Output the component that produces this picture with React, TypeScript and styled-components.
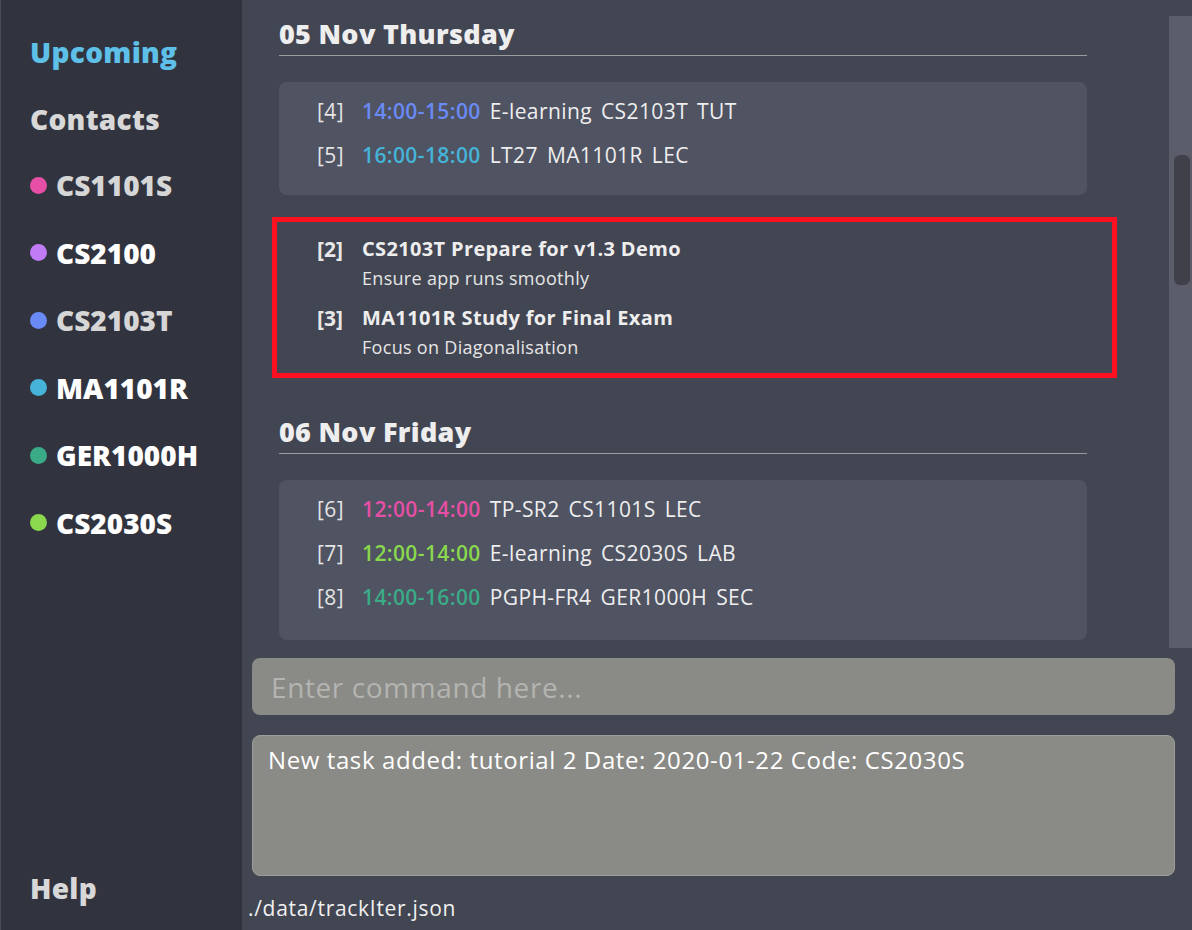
import React from "react";
import styled, { createGlobalStyle } from "styled-components";

const Global = createGlobalStyle`
  html, body { margin: 0; padding: 0; background: #424552; }
  body { font-family: "Open Sans", "Noto Sans", sans-serif; }
  * { box-sizing: border-box; }
`;

const Shell = styled.div`
  display: flex;
  width: 1192px;
  height: 930px;
  overflow: hidden;
  background: #424552;
`;

const Sidebar = styled.nav`
  width: 242px;
  flex: none;
  background: #31343f;
  border-left: 1px solid #4a4d58;
  display: flex;
  flex-direction: column;
  padding: 30px 0 20px 29px;
`;

const NavItem = styled.div<{ $color: string; $height?: number }>`
  font-size: 28px;
  font-weight: 800;
  color: ${(p) => p.$color};
  height: ${(p) => p.$height ?? 67}px;
  line-height: 44px;
  letter-spacing: 0.3px;
  flex: none;
`;

const ContactItem = styled.div<{ $text: string }>`
  display: flex;
  align-items: center;
  gap: 9px;
  height: 67.5px;
  padding-bottom: 25px;
  font-size: 28px;
  font-weight: 800;
  color: ${(p) => p.$text};
  letter-spacing: 0px;
  flex: none;
`;

const Dot = styled.span<{ $color: string }>`
  width: 17px;
  height: 17px;
  border-radius: 50%;
  background: ${(p) => p.$color};
  flex: none;
`;

const Spacer = styled.div`
  flex: 1;
`;

const Main = styled.main`
  flex: 1;
  display: flex;
  flex-direction: column;
  min-width: 0;
`;

const ListArea = styled.div`
  height: 648px;
  display: flex;
  flex: none;
`;

const ListContent = styled.div`
  flex: 1;
  padding: 14px 82px 0 37px;
  overflow: hidden;
`;

const Track = styled.div`
  width: 23px;
  margin-top: 16px;
  background: #5b5d6b;
  padding: 139px 2px 0 5px;
`;

const Thumb = styled.div`
  height: 130px;
  border-radius: 6px;
  background: #3f4049;
`;

const DayHeading = styled.h2`
  margin: 0;
  font-size: 27px;
  font-weight: 800;
  color: #eeeeee;
  line-height: 40px;
  padding-bottom: 1px;
  border-bottom: 1.5px solid #9b9b9e;
  letter-spacing: 0.3px;
`;

const Card = styled.div<{ $bottom: number }>`
  margin-top: 26px;
  background: #4f5362;
  border-radius: 8px;
  padding: 7px 0 ${(p) => p.$bottom}px 38px;
  display: flex;
  flex-direction: column;
`;

const EventRow = styled.div`
  display: flex;
  align-items: center;
  height: 44px;
  font-size: 21px;
  color: #eeeeee;
  gap: 9px;
  letter-spacing: 0.4px;
`;

const Index = styled.span`
  width: 36px;
  color: #e4e4e4;
`;

const Time = styled.span<{ $color: string }>`
  color: ${(p) => p.$color};
  font-weight: 600;
`;

const Highlight = styled.div`
  margin: 22px -30px 0 -7px;
  border: 5px solid #ff1020;
  padding: 12px 0 12px 40px;
  display: flex;
  flex-direction: column;
  gap: 11px;
`;

const Task = styled.div`
  display: flex;
`;

const TaskIndex = styled.span`
  width: 45px;
  font-size: 21px;
  font-weight: 700;
  color: #e8e8e8;
  line-height: 30px;
`;

const TaskBody = styled.div`
  display: flex;
  flex-direction: column;
`;

const TaskTitle = styled.span`
  font-size: 20px;
  font-weight: 700;
  color: #eeeeee;
  line-height: 30px;
  letter-spacing: 0.35px;
`;

const TaskDesc = styled.span`
  font-size: 18px;
  color: #e6e6e6;
  line-height: 28px;
  letter-spacing: 0.3px;
`;

const Section = styled.section<{ $gap: number }>`
  margin-top: ${(p) => p.$gap}px;
`;

const CommandBox = styled.div`
  margin: 10px 17px 0 10px;
  height: 57px;
  border-radius: 8px;
  background: #8a8a86;
  display: flex;
  align-items: center;
  padding-left: 19px;
  font-size: 28px;
  color: #b4b4b1;
  letter-spacing: 0.6px;
`;

const ResultBox = styled.div`
  margin: 20px 17px 0 10px;
  height: 141px;
  border-radius: 8px;
  background: #8a8a86;
  border: 1px solid #9c9c98;
  padding: 7px 15px;
  font-size: 24px;
  color: #ffffff;
  letter-spacing: 0.6px;
`;

const StatusBar = styled.div`
  padding: 18px 0 0 6px;
  font-size: 21px;
  color: #f0f0f0;
  letter-spacing: 0.7px;
`;

const contacts = [
  { code: "CS1101S", dot: "#e64fa5", text: "#d6d6d6" },
  { code: "CS2100", dot: "#c07bf5", text: "#ffffff" },
  { code: "CS2103T", dot: "#6a8af5", text: "#d6d6d6" },
  { code: "MA1101R", dot: "#45b4d8", text: "#ffffff" },
  { code: "GER1000H", dot: "#3aab86", text: "#ffffff" },
  { code: "CS2030S", dot: "#8ad84d", text: "#ffffff" },
];

type Ev = { idx: number; time: string; color: string; parts: string[] };

const thu: Ev[] = [
  { idx: 4, time: "14:00-15:00", color: "#6a8af5", parts: ["E-learning", "CS2103T", "TUT"] },
  { idx: 5, time: "16:00-18:00", color: "#45b4d8", parts: ["LT27", "MA1101R", "LEC"] },
];

const fri: Ev[] = [
  { idx: 6, time: "12:00-14:00", color: "#e64fa5", parts: ["TP-SR2", "CS1101S", "LEC"] },
  { idx: 7, time: "12:00-14:00", color: "#8ad84d", parts: ["E-learning", "CS2030S", "LAB"] },
  { idx: 8, time: "14:00-16:00", color: "#3aab86", parts: ["PGPH-FR4", "GER1000H", "SEC"] },
];

const EventList = ({ events, bottom }: { events: Ev[]; bottom: number }) => (
  <Card $bottom={bottom}>
    {events.map((e) => (
      <EventRow key={e.idx}>
        <Index>[{e.idx}]</Index>
        <Time $color={e.color}>{e.time}</Time>
        {e.parts.map((p) => (
          <span key={p}>{p}</span>
        ))}
      </EventRow>
    ))}
  </Card>
);

export default function App() {
  return (
    <>
      <Global />
      <Shell>
        <Sidebar>
          <NavItem $color="#5ec0e8">Upcoming</NavItem>
          <NavItem $color="#d8d8d8">Contacts</NavItem>
          {contacts.map((c) => (
            <ContactItem key={c.code} $text={c.text}>
              <Dot $color={c.dot} />
              {c.code}
            </ContactItem>
          ))}
          <Spacer />
          <NavItem $color="#d8d8d8" $height={44}>Help</NavItem>
        </Sidebar>
        <Main>
          <ListArea>
            <ListContent>
              <DayHeading>05 Nov Thursday</DayHeading>
              <EventList events={thu} bottom={18} />
              <Highlight>
                <Task>
                  <TaskIndex>[2]</TaskIndex>
                  <TaskBody>
                    <TaskTitle>CS2103T Prepare for v1.3 Demo</TaskTitle>
                    <TaskDesc>Ensure app runs smoothly</TaskDesc>
                  </TaskBody>
                </Task>
                <Task>
                  <TaskIndex>[3]</TaskIndex>
                  <TaskBody>
                    <TaskTitle>MA1101R Study for Final Exam</TaskTitle>
                    <TaskDesc>Focus on Diagonalisation</TaskDesc>
                  </TaskBody>
                </Task>
              </Highlight>
              <Section $gap={34}>
                <DayHeading>06 Nov Friday</DayHeading>
                <EventList events={fri} bottom={21} />
              </Section>
            </ListContent>
            <Track>
              <Thumb />
            </Track>
          </ListArea>
          <CommandBox>Enter command here...</CommandBox>
          <ResultBox>New task added: tutorial 2 Date: 2020-01-22 Code: CS2030S</ResultBox>
          <StatusBar>./data/trackIter.json</StatusBar>
        </Main>
      </Shell>
    </>
  );
}
